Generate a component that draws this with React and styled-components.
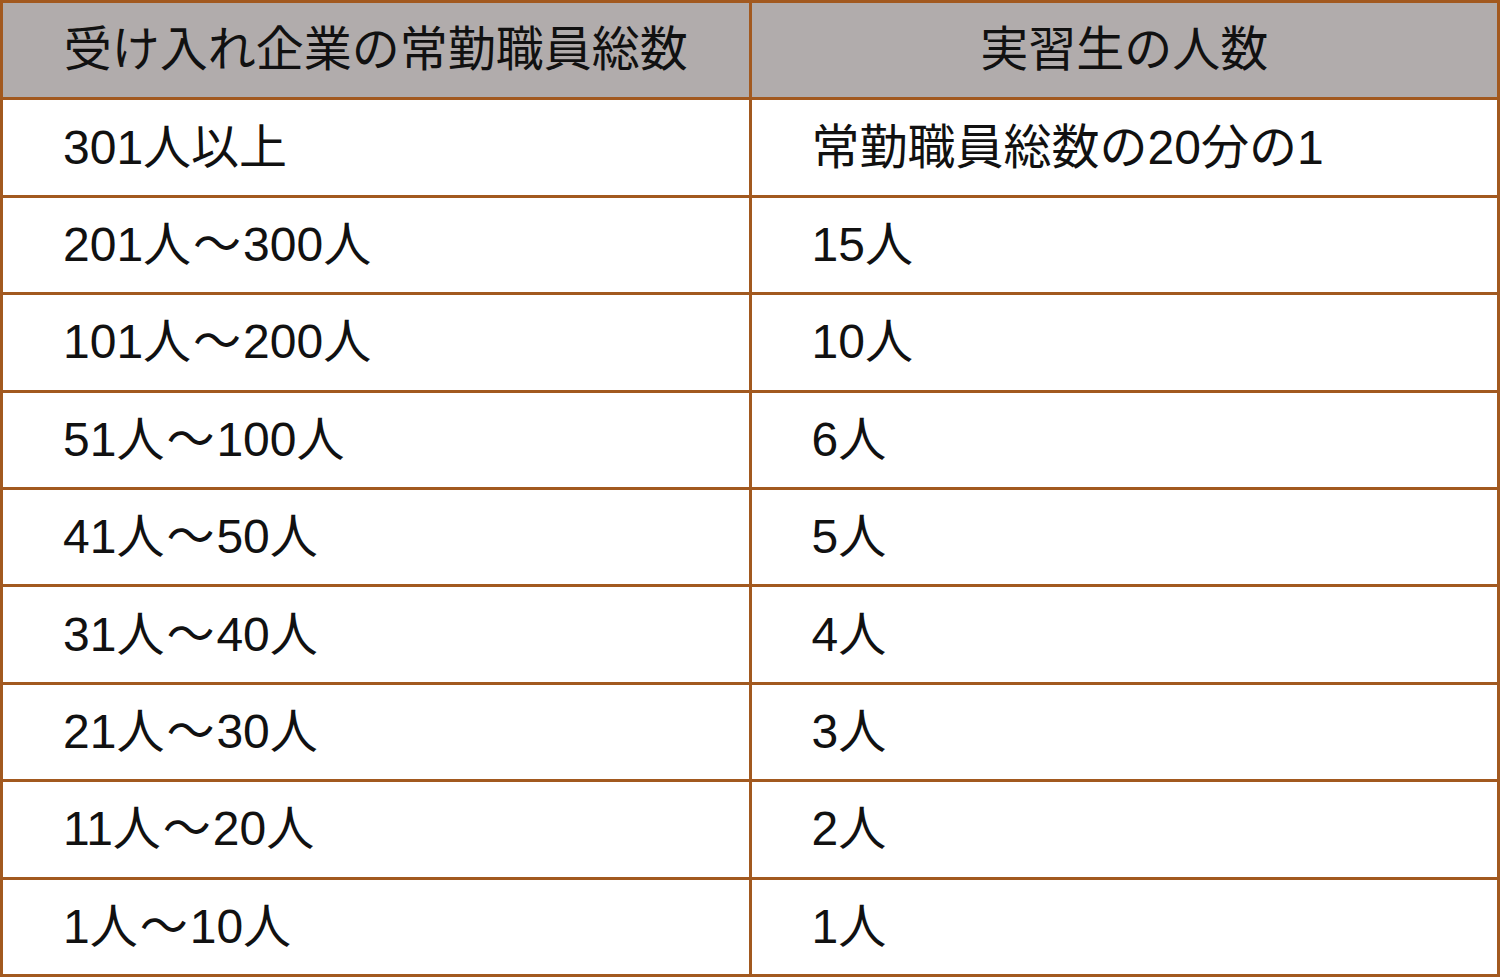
import React from 'react';
import styled, { createGlobalStyle } from 'styled-components';

const GlobalStyle = createGlobalStyle`
  html, body {
    margin: 0;
    padding: 0;
    background: #ffffff;
  }
`;

const Table = styled.div`
  display: grid;
  grid-template-columns: 1fr 1fr;
  grid-template-rows: repeat(10, 1fr);
  gap: 3px;
  width: 1500px;
  height: 977px;
  box-sizing: border-box;
  padding: 3px;
  background: #a2591f;
  font-family: "Liberation Sans", "Noto Sans CJK JP", sans-serif;
  font-size: 48px;
  color: #111111;
`;

const Cell = styled.div`
  display: flex;
  align-items: center;
  justify-content: ${({ $head }) => ($head ? 'center' : 'flex-start')};
  padding-left: ${({ $head }) => ($head ? '0' : '60px')};
  background: ${({ $head }) => ($head ? '#b1acac' : '#ffffff')};
  white-space: nowrap;
  line-height: 1;
`;

const Tilde = styled.span`
  margin: 0 2px;
`;

const rows = [
  ['301人以上', '常勤職員総数の20分の1'],
  ['201人～300人', '15人'],
  ['101人～200人', '10人'],
  ['51人～100人', '6人'],
  ['41人～50人', '5人'],
  ['31人～40人', '4人'],
  ['21人～30人', '3人'],
  ['11人～20人', '2人'],
  ['1人～10人', '1人'],
];

const withTilde = (text) => {
  const parts = text.split('～');
  if (parts.length < 2) return text;
  return (
    <>
      {parts[0]}
      <Tilde>～</Tilde>
      {parts[1]}
    </>
  );
};

export default function App() {
  return (
    <>
      <GlobalStyle />
      <Table>
        <Cell $head>受け入れ企業の常勤職員総数</Cell>
        <Cell $head>実習生の人数</Cell>
        {rows.map(([a, b]) => (
          <React.Fragment key={a}>
            <Cell>{withTilde(a)}</Cell>
            <Cell>{b}</Cell>
          </React.Fragment>
        ))}
      </Table>
    </>
  );
}
